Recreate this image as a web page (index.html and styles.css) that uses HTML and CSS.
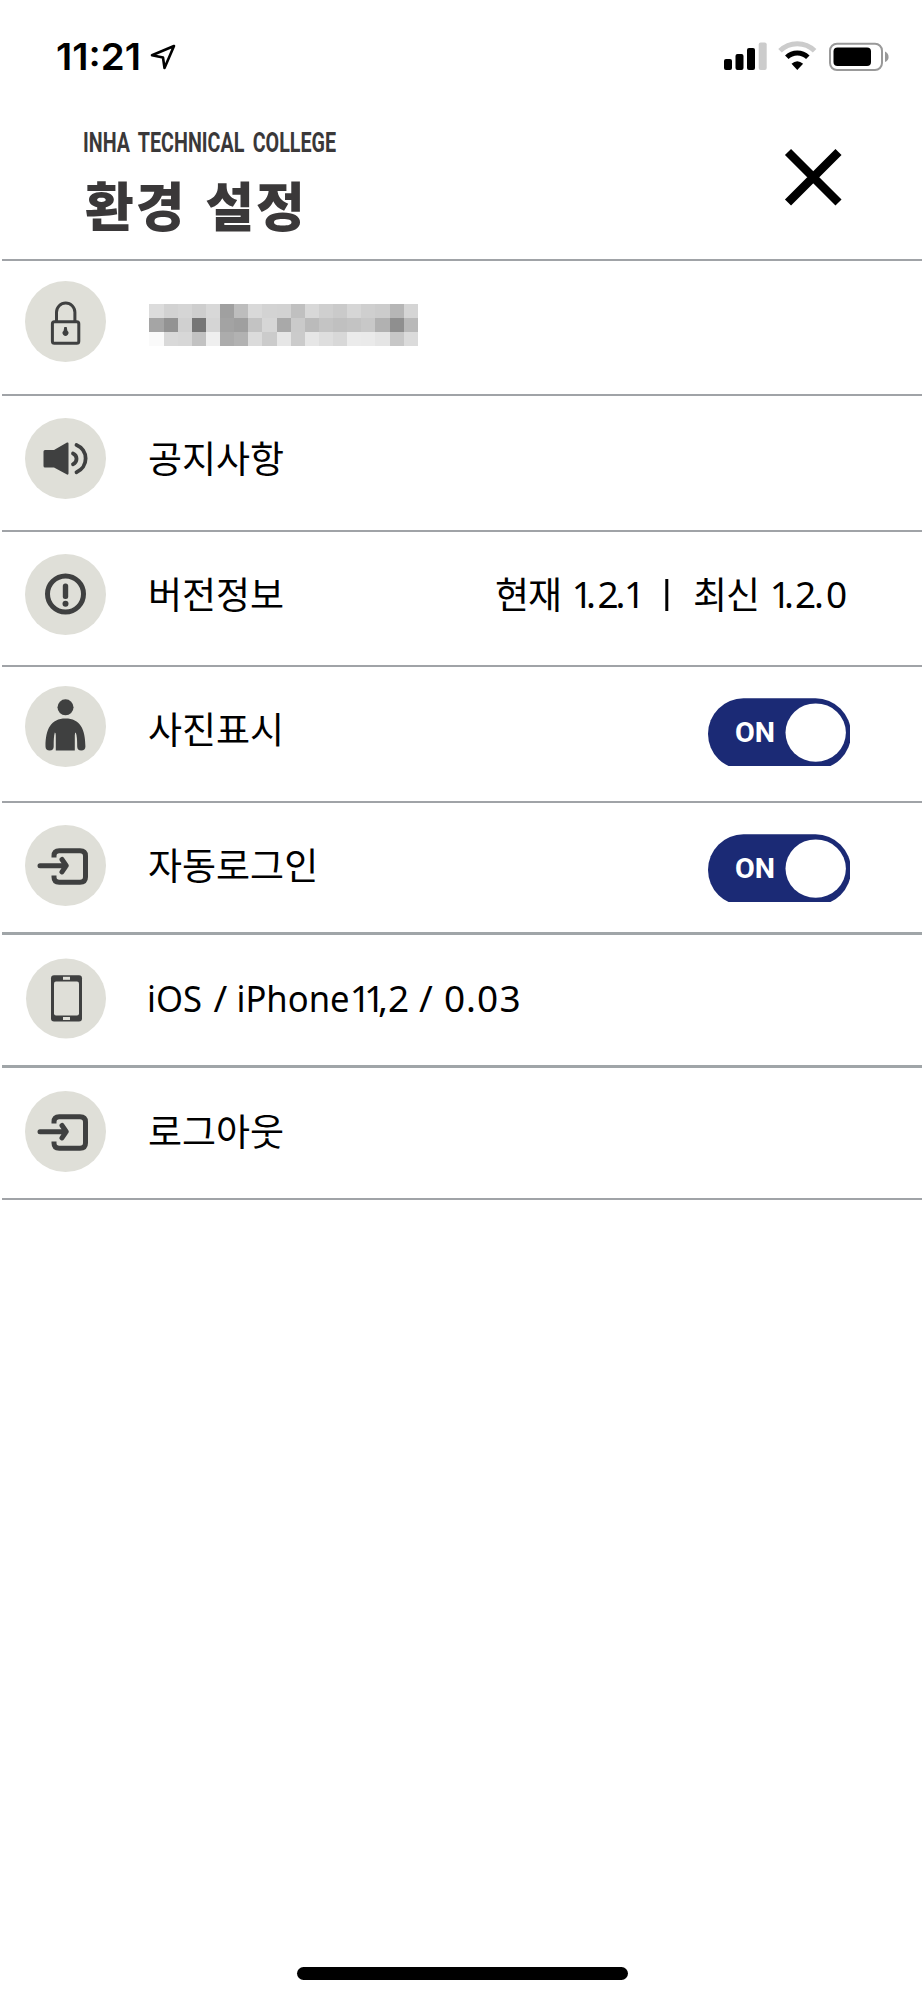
FILE: index.html
```html
<!DOCTYPE html>
<html lang="ko">
<head>
    <meta charset="UTF-8">
    <meta name="viewport" content="width=device-width, initial-scale=1.0">
    <title>환경 설정</title>
    <link rel="stylesheet" href="styles.css">
</head>
<body>
    <div class="status-bar">
        <svg class="clock" width="124" height="48" viewBox="0 -6 124 48">
            <text class="clock-text" x="1" y="30" textLength="85" lengthAdjust="spacingAndGlyphs">11:21</text>
            <path d="M119 6 L97 15.2 L108 17.5 L109.5 28 Z" fill="none" stroke="#000" stroke-width="2.6" stroke-linejoin="round"/>
        </svg>
        <svg class="signals" width="168" height="32" viewBox="0 0 168 32">
            <rect x="0" y="19" width="8" height="11" rx="2"/>
            <rect x="11.5" y="14" width="8" height="16" rx="2"/>
            <rect x="23" y="8" width="8" height="22" rx="2"/>
            <rect x="34.7" y="2.5" width="8" height="27.5" rx="2" fill="#ccc"/>
            <path d="M56 10.8 A24.5 24.5 0 0 1 90.6 10.8" fill="none" stroke="#ccc" stroke-width="5"/>
            <path d="M62.8 17.2 A15 15 0 0 1 83.8 17.2" fill="none" stroke="#000" stroke-width="5"/>
            <path d="M67.5 23.8 Q73.3 18.6 79.1 23.8 L73.3 30 Z"/>
            <rect x="106" y="3.7" width="52" height="26.3" rx="7" fill="none" stroke="#999" stroke-width="2"/>
            <rect x="109.5" y="7.5" width="37.5" height="18.5" rx="4"/>
            <path d="M161 11.5 Q164.6 13 164.6 17 Q164.6 20.5 161 22 Z" fill="#999"/>
        </svg>
    </div>

    <div class="header">
        <div class="titles">
            <svg class="college" width="260" height="36" viewBox="0 -4 260 36">
                <text class="college-text" x="0" y="23.5" textLength="253" lengthAdjust="spacingAndGlyphs">INHA TECHNICAL COLLEGE</text>
            </svg>
            <h1>환경 설정</h1>
        </div>
        <svg class="close" width="58" height="58" viewBox="0 0 58 58">
            <path d="M4 4 L54.5 54.5 M54.5 4 L4 54.5" stroke="#000" stroke-width="8.6"/>
        </svg>
    </div>

    <ul class="settings">
        <li class="row row-user">
            <svg class="icon" viewBox="0 0 81 81">
                <circle class="disc" cx="40.5" cy="40.5" r="40.5"/>
                <rect class="line" x="27.4" y="40.8" width="26.4" height="21.5" rx="2"/>
                <path class="line" d="M31.5 40 V31.2 a9.2 9.2 0 0 1 18.4 0 V40"/>
                <path class="solid" d="M39.3 46 h2.4 l0.7 3.8 a2.9 2.9 0 1 1 -3.8 0 Z"/>
            </svg>
            <div class="mosaic" id="mosaic"></div>
        </li>
        <li class="row">
            <svg class="icon" viewBox="0 0 81 81">
                <circle class="disc" cx="40.5" cy="40.5" r="40.5"/>
                <path class="solid" d="M20 32 H29 L42 24.5 q1.5 -0.5 1.5 1 V55.5 q0 1.5 -1.5 1 L29 49.4 H20 q-1.5 0 -1.5 -1.5 V33.5 q0 -1.5 1.5 -1.5 Z"/>
                <path class="line wave" d="M48 35.4 a5.9 5.9 0 0 1 0 10.8 M51.5 27 a14.7 14.7 0 0 1 0 27.2"/>
            </svg>
            <span class="label">공지사항</span>
        </li>
        <li class="row">
            <svg class="icon" viewBox="0 0 81 81">
                <circle class="disc" cx="40.5" cy="40.5" r="40.5"/>
                <circle class="line bold" cx="40.5" cy="40" r="18"/>
                <rect class="solid" x="37.8" y="29.6" width="5.4" height="15.4" rx="2.5"/>
                <circle class="solid" cx="40.5" cy="49.7" r="3"/>
            </svg>
            <span class="label">버전정보</span>
            <svg class="version" width="356" height="64" viewBox="0 0 356 64">
                <text class="row-text" y="45.5" x="1" textLength="67">현재</text>
                <text class="row-latin" y="45.3" x="77.7 92 103.6 121.5 130">1.2.1</text>
                <rect x="171.3" y="16" width="3" height="32"/>
                <text class="row-text" y="45.5" x="199" textLength="67">최신</text>
                <text class="row-latin" y="45.3" x="275.7 290 301 320 332">1.2.0</text>
            </svg>
        </li>
        <li class="row row-photo">
            <svg class="icon" viewBox="0 0 81 81">
                <circle class="disc" cx="40.5" cy="40.5" r="40.5"/>
                <circle class="solid" cx="40.5" cy="21.3" r="8"/>
                <path class="solid" d="M20.5 60.5 C20.5 43 26 32.5 40.5 32.5 S60.4 43 60.4 60.5 q0 4 -4.2 4 q-4 0 -4 -4 C52.2 54 52 50 50.8 46.5 q-1 0 -1 3 V64.5 H30.8 V49.5 q0 -3 -1 -3 C28.8 50 28.7 54 28.7 60.5 q0 4 -4 4 q-4.2 0 -4.2 -4 Z"/>
            </svg>
            <span class="label">사진표시</span>
            <svg class="toggle" width="142" height="68" viewBox="0 0 142 68">
                <rect x="0" y="0.3" width="143" height="71" rx="35.5" fill="#1b2a75"/>
                <text class="toggle-text" x="27" y="43.5" textLength="40" lengthAdjust="spacingAndGlyphs">ON</text>
                <ellipse cx="107.7" cy="34.6" rx="30.2" ry="29.2" fill="#fff"/>
            </svg>
        </li>
        <li class="row row-thick">
            <svg class="icon" viewBox="0 0 81 81">
                <circle class="disc" cx="40.5" cy="40.5" r="40.5"/>
                <path class="line bold" d="M29 32.5 V31 q0 -5.2 5.2 -5.2 H55 q5.5 0 5.5 5.2 V52 q0 5.2 -5.5 5.2 H34.2 q-5.2 0 -5.2 -5.2 V50.5"/>
                <path class="line bold round" d="M15 40.7 H41 M37 34.5 L41.3 40.7 L37 46.9"/>
            </svg>
            <span class="label">자동로그인</span>
            <svg class="toggle" width="142" height="68" viewBox="0 0 142 68">
                <rect x="0" y="0.3" width="143" height="71" rx="35.5" fill="#1b2a75"/>
                <text class="toggle-text" x="27" y="43.5" textLength="40" lengthAdjust="spacingAndGlyphs">ON</text>
                <ellipse cx="107.7" cy="34.6" rx="30.2" ry="29.2" fill="#fff"/>
            </svg>
        </li>
        <li class="row row-thick row-device">
            <svg class="icon" viewBox="0 0 81 81">
                <circle class="disc" cx="41" cy="40.5" r="40"/>
                <rect class="solid" x="26" y="17.2" width="31" height="46.3" rx="3"/>
                <rect class="disc" x="29" y="23.5" width="25" height="34" rx="2"/>
                <rect class="disc" x="38" y="18.8" width="7" height="3"/>
                <rect class="disc" x="38" y="59" width="7" height="3"/>
            </svg>
            <svg class="device" width="380" height="64" viewBox="0 0 380 64">
                <text class="row-latin" y="44.5" x="-1" textLength="55" lengthAdjust="spacingAndGlyphs">iOS</text>
                <text class="row-latin" y="44.5" x="65.5">/</text>
                <text class="row-latin" y="44.5" x="88.5" textLength="113" lengthAdjust="spacingAndGlyphs">iPhone</text>
                <text class="row-latin" y="44.5" x="201.7 216 230 240">11,2</text>
                <text class="row-latin" y="44.5" x="271">/</text>
                <text class="row-latin" y="44.5" x="296 318 329 351.5">0.03</text>
            </svg>
        </li>
        <li class="row row-logout">
            <svg class="icon" viewBox="0 0 81 81">
                <circle class="disc" cx="40.5" cy="40.5" r="40.5"/>
                <path class="line bold" d="M29 32.5 V31 q0 -5.2 5.2 -5.2 H55 q5.5 0 5.5 5.2 V52 q0 5.2 -5.5 5.2 H34.2 q-5.2 0 -5.2 -5.2 V50.5"/>
                <path class="line bold round" d="M15 40.7 H41 M37 34.5 L41.3 40.7 L37 46.9"/>
            </svg>
            <span class="label">로그아웃</span>
        </li>
    </ul>

    <div class="home-indicator"></div>

    <script>
        // Gray levels of the masked user name, one string per line
        const shades = [
            "dc d2 d5 ce d8 a0 bd d9 d3 d2 c0 d8 cf ca d6 cf cc b6 d5",
            "a5 93 d0 76 d5 a3 9f c3 d6 a9 ca bb c4 c0 c3 c8 b1 8f b9",
            "fa d9 d7 c2 ef ac b2 db cb e6 cb e6 de d8 eb ea e5 c7 db"
        ];
        const mosaic = document.getElementById('mosaic');
        shades.join(" ").split(" ").forEach(function (s) {
            const cell = document.createElement('i');
            cell.style.background = '#' + s + s + s;
            mosaic.appendChild(cell);
        });
    </script>
</body>
</html>
```
FILE: styles.css
```css
* {
    box-sizing: border-box;
}
body {
    margin: 0;
    height: 2000px;
    display: flex;
    flex-direction: column;
    background: #fff;
    color: #000;
    font-family: "Noto Sans CJK KR", sans-serif;
}
svg {
    display: block;
    flex: none;
}
.status-bar {
    height: 120px;
    padding: 34px 32px 0 55px;
    display: flex;
    justify-content: space-between;
}
.signals {
    margin-top: 6px;
}
.clock-text {
    font-family: Inter, sans-serif;
    font-size: 36.5px;
    font-weight: 600;
}
.header {
    height: 139px;
    padding: 4px 82px 0 83px;
    display: flex;
    justify-content: space-between;
}
.college {
    overflow: visible;
}
.college-text {
    font-family: "Roboto", sans-serif;
    font-size: 28px;
    font-weight: 700;
    word-spacing: 5px;
    fill: #3a3839;
}
h1 {
    margin: 0 0 0 2px;
    font-size: 53px;
    line-height: 88px;
    font-weight: 900;
    letter-spacing: 2px;
    word-spacing: 2px;
    color: #3a3839;
}
.close {
    margin-top: 24px;
}
.settings {
    list-style: none;
    margin: 0 2px;
    padding: 0;
    border-top: 2px solid #a0a3a7;
}
.row {
    height: 136px;
    padding: 0 72px 0 23.4px;
    display: flex;
    align-items: flex-start;
    border-bottom: 2px solid #a0a3a7;
}
.row-user {
    height: 135px;
}
.row:nth-child(3) {
    height: 135px;
}
.row-thick {
    height: 132px;
    border-bottom: 3px solid #a0a5a8;
}
.row-device {
    height: 133px;
}
.row-logout {
    height: 132px;
}
.icon {
    width: 81px;
    height: 81px;
    margin-top: 22px;
    margin-right: 41.6px;
}
.row-user .icon {
    margin-top: 20px;
}
.row-photo .icon {
    margin-top: 19px;
}
.row-device .icon,
.row-logout .icon {
    margin-top: 23px;
}
.disc {
    fill: #dfdfd8;
}
.solid {
    fill: #3f4040;
}
.line {
    fill: none;
    stroke: #3f4040;
    stroke-width: 3;
}
.wave {
    stroke-width: 3.8;
    stroke-linecap: round;
}
.bold {
    stroke-width: 5;
}
.round {
    stroke-linecap: round;
    stroke-linejoin: round;
}
.mosaic {
    margin: 43px 0 0 1.5px;
    display: grid;
    grid-template-columns: repeat(19, 14.13px);
    grid-auto-rows: 14px;
}
.label {
    font-size: 37px;
    line-height: 122px;
}
.row-logout .label {
    line-height: 124px;
}
.row-text {
    font-size: 37px;
}
.row-latin {
    font-family: "Noto Sans", sans-serif;
    font-size: 37px;
}
.version {
    margin: 31px 0 0 auto;
}
.device {
    margin-top: 32px;
    overflow: visible;
}
.toggle {
    margin: 31px 0 0 auto;
}
.toggle-text {
    font-family: Roboto, sans-serif;
    font-size: 28px;
    font-weight: 700;
    fill: #fff;
}
.home-indicator {
    width: 331px;
    height: 13px;
    margin: auto auto 20px 297px;
    border-radius: 7px;
    background: #000;
}
```
